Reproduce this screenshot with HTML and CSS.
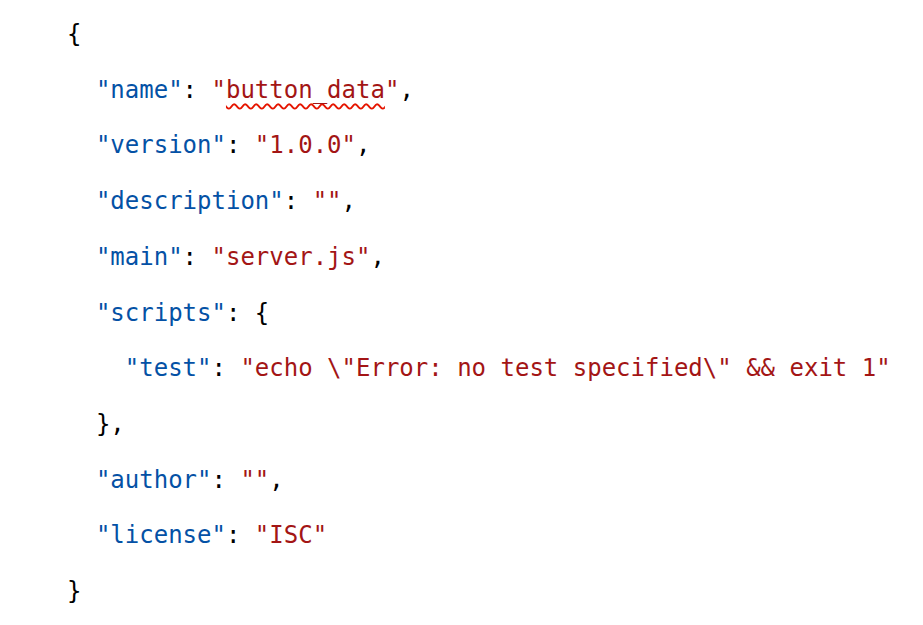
FILE: index.html
```html
<!DOCTYPE html>
<html>
<head>
<meta charset="utf-8">
<link rel="stylesheet" href="styles.css">
</head>
<body>
<pre class="code"><span class="p">{</span>
  <span class="k">"name"</span><span class="p">: </span><span class="s">"<span class="spell">button_data</span>"</span><span class="p">,</span>
  <span class="k">"version"</span><span class="p">: </span><span class="s">"1.0.0"</span><span class="p">,</span>
  <span class="k">"description"</span><span class="p">: </span><span class="s">""</span><span class="p">,</span>
  <span class="k">"main"</span><span class="p">: </span><span class="s">"server.js"</span><span class="p">,</span>
  <span class="k">"scripts"</span><span class="p">: {</span>
    <span class="k">"test"</span><span class="p">: </span><span class="s">"echo \"Error: no test specified\" &amp;&amp; exit 1"</span>
  <span class="p">},</span>
  <span class="k">"author"</span><span class="p">: </span><span class="s">""</span><span class="p">,</span>
  <span class="k">"license"</span><span class="p">: </span><span class="s">"ISC"</span>
<span class="p">}</span></pre>
</body>
</html>
```
FILE: styles.css
```css
html, body {
  margin: 0;
  padding: 0;
  background: #ffffff;
}
.code {
  margin: 0;
  padding: 7px 0 0 67px;
  font-family: "DejaVu Sans Mono", "Liberation Mono", monospace;
  font-size: 24px;
  line-height: 55.7px;
  color: #000000;
}
.k { color: #0451a5; }
.s { color: #a31515; }
.p { color: #000000; }
.spell {
  text-decoration: underline wavy #e51400;
  text-decoration-thickness: 1.5px;
  text-underline-offset: 5px;
}
```
